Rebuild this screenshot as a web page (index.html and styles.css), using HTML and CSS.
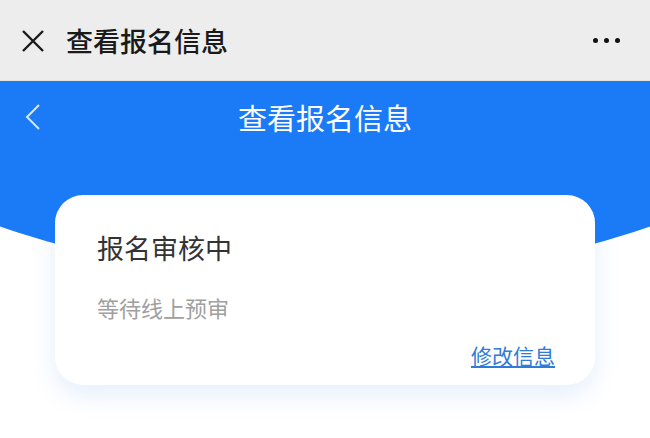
FILE: index.html
```html
<!DOCTYPE html>
<html lang="zh-CN">
<head>
<meta charset="UTF-8">
<meta name="viewport" content="width=device-width, initial-scale=1.0">
<title>查看报名信息</title>
<link rel="stylesheet" href="styles.css">
</head>
<body>

<div class="topbar">
  <!-- close button -->
  <svg class="close-icon" width="22" height="22" viewBox="0 0 22 22">
    <path d="M1 1 L21 21 M21 1 L1 21" stroke="#1a1a1a" stroke-width="2.4" fill="none"/>
  </svg>
  <span class="topbar-title">查看报名信息</span>
  <div class="more">
    <span class="dot"></span><span class="dot"></span><span class="dot"></span>
  </div>
</div>

<div class="page">
  <div class="nav">
    <svg class="back-icon" width="16" height="26" viewBox="0 0 16 26">
      <path d="M14 1 L2 13 L14 25" stroke="#d6e6fd" stroke-width="2" fill="none"/>
    </svg>
    <span class="nav-title">查看报名信息</span>
  </div>

  <div class="card">
    <div class="card-title">报名审核中</div>
    <div class="card-desc">等待线上预审</div>
    <div class="card-action"><a href="#">修改信息</a></div>
  </div>
</div>

</body>
</html>
```

FILE: styles.css
```css
body, html {
  margin: 0;
  height: 100%;
  background: #fff;
  font-family: "Noto Sans CJK SC", "Noto Sans", sans-serif;
}
.topbar {
  height: 80px;
  background-color: #ededed;
  border-bottom: 1px solid #e2e2e2;
  display: flex;
  align-items: center;
  padding: 0 22px;
}
.close-icon {
  margin-top: 2px;
}
.topbar-title {
  margin-left: 22px;
  font-size: 27px;
  font-weight: 500;
  color: #1a1a1a;
  flex: 1;
}
.more {
  display: flex;
  gap: 6px;
  margin-right: 8px;
}
.dot {
  width: 5px;
  height: 5px;
  border-radius: 50%;
  background: #111;
}
.page {
  position: relative;
  overflow: hidden;
  min-height: 357px;
}
/* blue header with a wide curved bottom */
.page::before {
  content: "";
  position: absolute;
  top: -200px;
  left: -50%;
  width: 200%;
  height: 398px;
  background-color: #1b7bf7;
  border-radius: 0 0 50% 50% / 0 0 392px 392px;
}
.nav {
  position: relative;
  height: 70px;
  display: flex;
  align-items: center;
  justify-content: center;
}
.back-icon {
  position: absolute;
  left: 25px;
  top: 23px;
}
.nav-title {
  color: #fff;
  font-size: 29px;
  margin-top: 2px;
}
.card {
  position: relative;
  margin: 44px 55px 0;
  background: #fff;
  border-radius: 28px;
  padding: 35px 40px 16px 42px;
  box-shadow: 0 10px 26px rgba(40, 120, 240, 0.12);
}
.card-title {
  font-size: 27px;
  line-height: 36px;
  color: #333;
}
.card-desc {
  margin-top: 26px;
  font-size: 22px;
  line-height: 30px;
  color: #a0a0a0;
}
.card-action {
  margin-top: 19px;
  text-align: right;
  font-size: 21px;
  line-height: 28px;
}
.card-action a {
  color: #2f7bd8;
  text-decoration: underline;
}
```
